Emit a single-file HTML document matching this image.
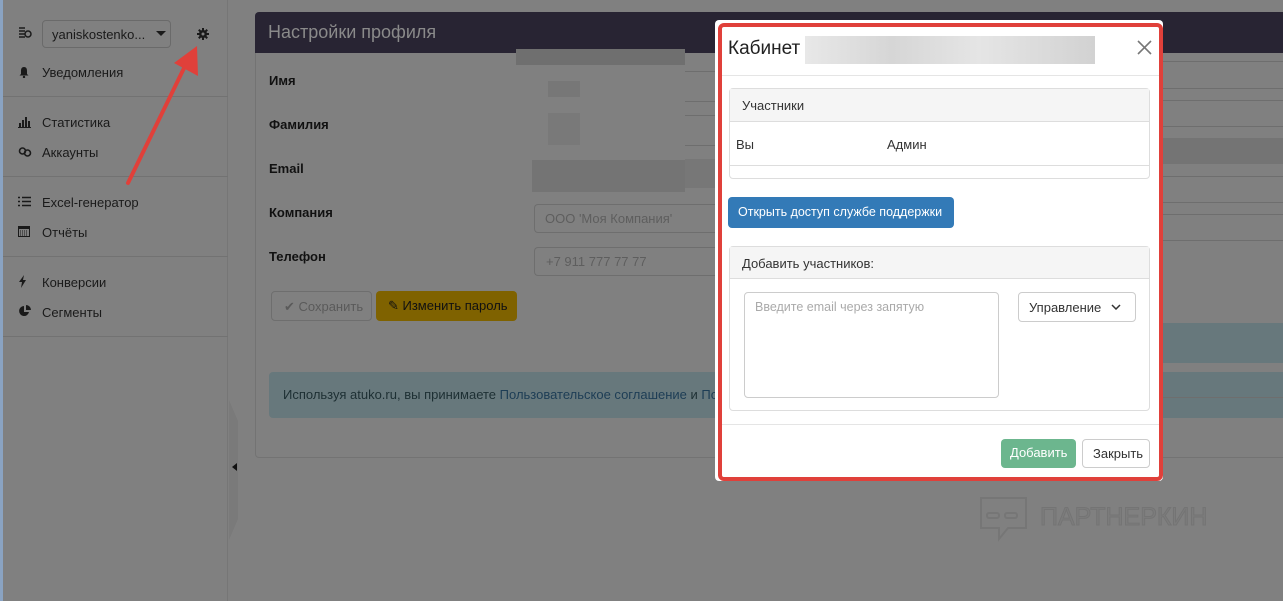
<!DOCTYPE html>
<html><head><meta charset="utf-8"><style>
*{box-sizing:border-box;margin:0;padding:0}
body{width:1283px;height:601px;overflow:hidden;background:#808080;font-family:"Liberation Sans","Noto Sans CJK SC",sans-serif;font-size:13px;color:#111;position:relative}
.abs{position:absolute}
.side{left:0;top:0;width:228px;height:601px;border-right:1px solid #767676;background:#808080}
.blue{left:0;top:0;width:3px;height:601px;background:#8aa3c2}
.hr{position:absolute;left:3px;width:225px;height:1px;background:#727272}
.item{position:absolute;left:42px;font-size:13px;color:#1a1a1a}
.ico{position:absolute;left:18px}
.lbl{position:absolute;left:269px;font-weight:bold;font-size:13px;color:#111}
.line{position:absolute;height:1px;background:#6e6e6e}
.modal{left:715px;top:20px;width:448px;height:461px;background:#fff;border-radius:4px}
.red{left:718px;top:23px;width:445px;height:458px;border:4px solid #e0403a;border-radius:6px}
.panel{position:absolute;border:1px solid #ddd;border-radius:4px;background:#fff}
.ph{background:#f5f5f5;border-bottom:1px solid #ddd;color:#333;padding-left:12px}
</style></head><body>
<div class="abs side"></div>
<div class="abs blue"></div>
<svg class="ico" style="top:27px" width="14" height="12"><path d="M1 1h6M1 4h6M1 7h6M1 10h6" stroke="#1a1a1a" stroke-width="1.4"/><circle cx="10" cy="7" r="3" fill="none" stroke="#1a1a1a" stroke-width="1.5"/></svg>
<div class="abs" style="left:42px;top:20px;width:129px;height:28px;border:1px solid #6a6a6a;border-radius:4px;padding:6px 0 0 9px;color:#1a1a1a">yaniskostenko...</div>
<div class="abs" style="left:156px;top:31px;border-left:5px solid transparent;border-right:5px solid transparent;border-top:5px solid #1a1a1a"></div>
<svg class="abs" style="left:197px;top:28px" width="12" height="12" viewBox="0 0 12 12"><g fill="#1a1a1a"><circle cx="6" cy="6" r="4"/><rect x="5" y="0" width="2" height="12"/><rect x="0" y="5" width="12" height="2"/><rect x="5" y="0" width="2" height="12" transform="rotate(45 6 6)"/><rect x="5" y="0" width="2" height="12" transform="rotate(-45 6 6)"/></g><circle cx="6" cy="6" r="1.5" fill="#808080"/></svg>
<svg class="ico" style="top:66px" width="12" height="12"><path d="M6 1C3.5 1 3 3 3 5v3L1.5 9.5h9L9 8V5C9 3 8.5 1 6 1z" fill="#1a1a1a"/><circle cx="6" cy="11" r="1.2" fill="#1a1a1a"/></svg>
<div class="item" style="top:65px">Уведомления</div>
<div class="hr" style="top:96px"></div>
<svg class="ico" style="top:116px" width="13" height="12"><path d="M0 11.5h13" stroke="#1a1a1a"/><rect x="1" y="7" width="2" height="4" fill="#1a1a1a"/><rect x="4" y="4" width="2" height="7" fill="#1a1a1a"/><rect x="7" y="1" width="2" height="10" fill="#1a1a1a"/><rect x="10" y="5" width="2" height="6" fill="#1a1a1a"/></svg>
<div class="item" style="top:115px">Статистика</div>
<svg class="ico" style="top:146px" width="14" height="12"><circle cx="4.5" cy="5" r="3" fill="none" stroke="#1a1a1a" stroke-width="1.6"/><circle cx="9.5" cy="7" r="3" fill="none" stroke="#1a1a1a" stroke-width="1.6"/></svg>
<div class="item" style="top:145px">Аккаунты</div>
<div class="hr" style="top:176px"></div>
<svg class="ico" style="top:196px" width="13" height="11"><path d="M0 1.5h2M0 5.5h2M0 9.5h2M4 1.5h9M4 5.5h9M4 9.5h9" stroke="#1a1a1a" stroke-width="1.6"/></svg>
<div class="item" style="top:195px">Excel-генератор</div>
<svg class="ico" style="top:226px" width="12" height="11"><rect x="0.5" y="0.5" width="11" height="10" fill="none" stroke="#1a1a1a"/><rect x="0" y="0" width="12" height="3" fill="#1a1a1a"/><path d="M2 5h8M2 7h8M2 9h8" stroke="#1a1a1a" stroke-dasharray="1 1"/></svg>
<div class="item" style="top:225px">Отчёты</div>
<div class="hr" style="top:256px"></div>
<svg class="ico" style="top:275px" width="10" height="13"><path d="M6 0L1 7h3l-1 6 5-8H5z" fill="#1a1a1a"/></svg>
<div class="item" style="top:275px">Конверсии</div>
<svg class="ico" style="top:305px" width="13" height="12"><path d="M6 1a5 5 0 1 0 5 6H6z" fill="#1a1a1a"/><path d="M8 0v5h5a5 5 0 0 0-5-5z" fill="#1a1a1a"/></svg>
<div class="item" style="top:305px">Сегменты</div>
<div class="hr" style="top:336px"></div>
<div class="abs" style="left:229px;top:400px;width:9px;height:140px;background:#7a7a7a;clip-path:polygon(0 0,100% 15%,100% 85%,0 100%)"></div>
<div class="abs" style="left:232px;top:463px;border-top:4px solid transparent;border-bottom:4px solid transparent;border-right:5px solid #111"></div>

<!-- main panel -->
<div class="abs" style="left:255px;top:12px;width:1040px;height:446px;border:1px solid #737373;border-radius:4px"></div>
<div class="abs" style="left:255px;top:12px;width:1040px;height:41px;background:#282433;border-radius:4px 4px 0 0;color:#8a8a8a;font-size:18px;padding:10px 0 0 13px">Настройки профиля</div>
<div class="lbl" style="top:73px">Имя</div>
<div class="lbl" style="top:117px">Фамилия</div>
<div class="lbl" style="top:161px">Email</div>
<div class="lbl" style="top:205px">Компания</div>
<div class="lbl" style="top:249px">Телефон</div>
<div class="abs" style="left:516px;top:49px;width:169px;height:16px;background:#6f6f6f"></div>
<div class="abs" style="left:532px;top:160px;width:153px;height:32px;background:#747474"></div>
<div class="abs" style="left:548px;top:81px;width:32px;height:16px;background:#777"></div>
<div class="abs" style="left:548px;top:113px;width:32px;height:32px;background:#797979"></div>
<div class="line" style="left:685px;top:71px;width:40px"></div>
<div class="line" style="left:685px;top:101px;width:40px"></div>
<div class="line" style="left:685px;top:115px;width:40px"></div>
<div class="line" style="left:685px;top:145px;width:40px"></div>
<div class="abs" style="left:685px;top:159px;width:40px;height:29px;background:#777"></div>
<div class="abs" style="left:534px;top:204px;width:200px;height:29px;border:1px solid #6e6e6e;border-right:none;border-radius:4px 0 0 4px;color:#5e5e5e;padding:6px 10px">ООО 'Моя Компания'</div>
<div class="abs" style="left:534px;top:247px;width:200px;height:29px;border:1px solid #6e6e6e;border-right:none;border-radius:4px 0 0 4px;color:#5e5e5e;padding:6px 11px">+7 911 777 77 77</div>
<div class="abs" style="left:271px;top:291px;width:101px;height:30px;border:1px solid #6e6e6e;border-radius:4px;color:#5a5a5a;padding:7px 0 0 12px">✔ Сохранить</div>
<div class="abs" style="left:376px;top:291px;width:141px;height:30px;background:#7f6200;border-radius:4px;color:#111;padding:7px 0 0 12px">✎ Изменить пароль</div>
<div class="abs" style="left:269px;top:372px;width:1020px;height:46px;background:#67787c;border-radius:4px;color:#1d2f33;padding:15px 0 0 14px">Используя atuko.ru, вы принимаете <span style="color:#1d3d55">Пользовательское соглашение</span> и <span style="color:#1d3d55">Политику</span></div>
<!-- right of modal -->
<div class="line" style="left:1163px;top:61px;width:120px"></div>
<div class="line" style="left:1163px;top:88px;width:120px"></div>
<div class="line" style="left:1163px;top:100px;width:120px"></div>
<div class="line" style="left:1163px;top:126px;width:120px"></div>
<div class="abs" style="left:1163px;top:138px;width:120px;height:26px;background:#747474"></div>
<div class="line" style="left:1163px;top:176px;width:120px"></div>
<div class="line" style="left:1163px;top:202px;width:120px"></div>
<div class="line" style="left:1163px;top:214px;width:120px"></div>
<div class="line" style="left:1163px;top:240px;width:120px"></div>
<div class="abs" style="left:1163px;top:323px;width:120px;height:40px;background:#67787c"></div>
<div class="line" style="left:1163px;top:397px;width:120px"></div>
<!-- watermark -->
<svg class="abs" style="left:978px;top:495px" width="260" height="55"><path d="M3 3h45v30H30l-9 11v-11H3z" fill="none" stroke="#767676" stroke-width="2"/><rect x="9" y="18" width="12" height="5" rx="2" fill="none" stroke="#767676" stroke-width="2"/><rect x="27" y="18" width="12" height="5" rx="2" fill="none" stroke="#767676" stroke-width="2"/><text x="62" y="30" font-family="Liberation Sans" font-size="25" fill="#7c7c7c" stroke="#747474" stroke-width="1">ПАРТНЕРКИН</text></svg>

<!-- modal -->
<div class="abs modal"></div>
<div class="abs red"></div>
<div class="abs" style="left:728px;top:38px;font-size:19px;color:#222">Кабинет</div>
<div class="abs" style="left:805px;top:36px;width:290px;height:28px;background:linear-gradient(90deg,#e8e8e8,#d6d6d6 30%,#e5e5e5 60%,#d2d2d2)"></div>
<svg class="abs" style="left:1137px;top:40px" width="15" height="15"><path d="M1 1l13 13M14 1L1 14" stroke="#777" stroke-width="1.6"/></svg>
<div class="abs" style="left:722px;top:75px;width:437px;height:1px;background:#e5e5e5"></div>
<div class="panel" style="left:729px;top:88px;width:421px;height:91px">
<div class="ph" style="height:33px;padding-top:9px">Участники</div>
<div style="position:absolute;left:6px;top:48px;color:#333">Вы</div>
<div style="position:absolute;left:157px;top:48px;color:#333">Админ</div>
<div style="position:absolute;left:0;top:76px;width:419px;height:1px;background:#ddd"></div>
</div>
<div class="abs" style="left:728px;top:197px;width:226px;height:31px;background:#337ab7;border-radius:4px;color:#fff;padding:8px 0 0 10px;font-size:12.5px">Открыть доступ службе поддержки</div>
<div class="panel" style="left:729px;top:246px;width:421px;height:165px">
<div class="ph" style="height:32px;padding-top:9px">Добавить участников:</div>
<div style="position:absolute;left:14px;top:45px;width:255px;height:106px;border:1px solid #ccc;border-radius:4px;color:#aaa;padding:7px 10px;font-size:12.5px">Введите email через запятую</div>
<div style="position:absolute;left:288px;top:45px;width:118px;height:30px;border:1px solid #ccc;border-radius:4px;color:#333;padding:7px 10px">Управление<svg style="position:absolute;right:14px;top:11px" width="10" height="6"><path d="M1 1l4 4 4-4" fill="none" stroke="#333" stroke-width="1.5"/></svg></div>
</div>
<div class="abs" style="left:722px;top:424px;width:437px;height:1px;background:#e5e5e5"></div>
<div class="abs" style="left:1001px;top:439px;width:75px;height:29px;background:#6cb68e;border-radius:4px;color:#fff;padding:6px 0 0 9px">Добавить</div>
<div class="abs" style="left:1082px;top:439px;width:68px;height:29px;border:1px solid #ccc;border-radius:4px;color:#333;padding:6px 0 0 10px">Закрыть</div>

<!-- arrow -->
<svg class="abs" style="left:0;top:0" width="260" height="200"><line x1="128" y1="183" x2="187" y2="62" stroke="#e0403a" stroke-width="4" stroke-linecap="round"/><polygon points="197,46 198,76 174,63" fill="#e0403a"/></svg>
</body></html>
